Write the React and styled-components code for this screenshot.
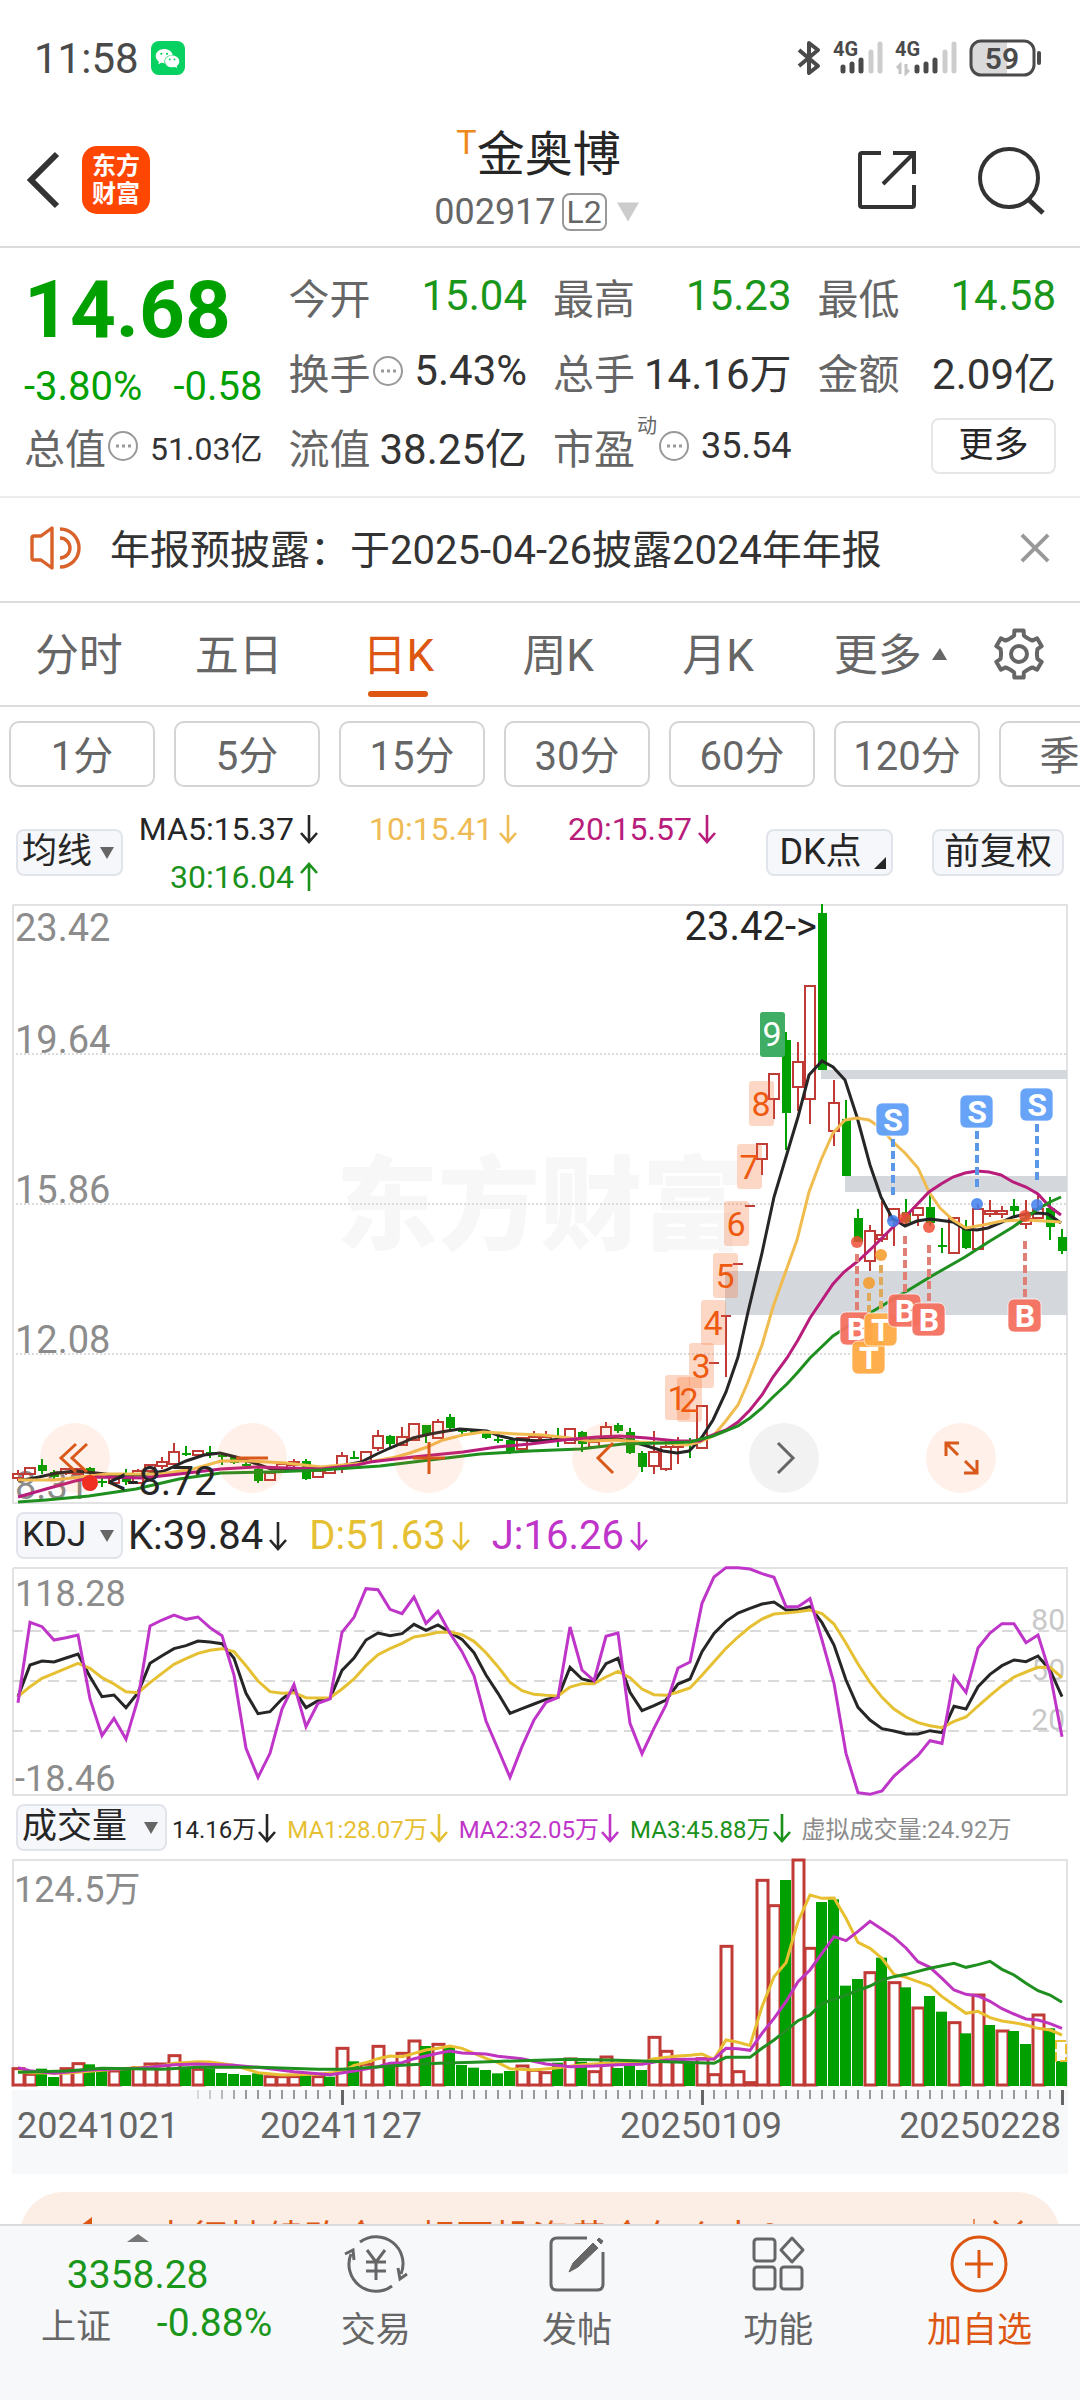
import React from "react";
import styled, { createGlobalStyle } from "styled-components";
import { AiFillWechat } from "react-icons/ai";

const GREEN = "#00a000";
const RED = "#c03a36";
const ORANGE = "#dd5713";

/* ---------- chart data ---------- */

const STEP = 12;
const px = (i) => 6 + i * STEP;

// colour, body top, body bottom, high, low
const candles = [
  ["r", 570, 574, 566, 577], ["r", 564, 570, 564, 571], ["g", 561, 567, 555, 570],
  ["g", 568, 573, 566, 575], ["r", 565, 569, 564, 571], ["r", 565, 570, 564, 571],
  ["g", 564, 569, 563, 571], ["g", 577, 579, 574, 583], ["r", 573, 579, 571, 580],
  ["g", 574, 578, 565, 581], ["r", 567, 579, 565, 580], ["r", 561, 567, 560, 568],
  ["r", 558, 562, 553, 565], ["r", 548, 560, 539, 561], ["g", 549, 551, 542, 552],
  ["r", 547, 551, 546, 553], ["g", 548, 550, 542, 554], ["g", 551, 553, 549, 561],
  ["g", 553, 559, 552, 560], ["g", 560, 562, 558, 565], ["g", 565, 577, 564, 579],
  ["r", 569, 576, 568, 577], ["r", 560, 565, 559, 566], ["r", 558, 561, 555, 565],
  ["g", 557, 575, 555, 576], ["r", 567, 573, 566, 574], ["r", 565, 569, 564, 570],
  ["r", 552, 563, 548, 569], ["g", 553, 555, 547, 555], ["r", 548, 558, 548, 559],
  ["r", 532, 544, 526, 547], ["g", 532, 540, 531, 544], ["r", 533, 541, 523, 542],
  ["r", 520, 536, 519, 537], ["g", 521, 531, 521, 539], ["r", 518, 534, 515, 535],
  ["g", 513, 524, 510, 526], ["g", 526, 528, 525, 532], ["g", 527, 529, 526, 530],
  ["g", 529, 534, 528, 535], ["g", 535, 537, 532, 539], ["g", 536, 549, 535, 550],
  ["r", 534, 545, 533, 546], ["r", 533, 536, 527, 538], ["r", 533, 536, 527, 538],
  ["g", 535, 537, 524, 543], ["r", 525, 539, 524, 540], ["g", 528, 540, 527, 548],
  ["r", 538, 543, 537, 544], ["r", 523, 536, 518, 537], ["g", 521, 527, 519, 529],
  ["g", 528, 549, 524, 550], ["g", 549, 563, 547, 568], ["r", 548, 562, 527, 570],
  ["r", 543, 565, 536, 567], ["r", 540, 543, 533, 560], ["g", 536, 539, 534, 554],
  ["r", 502, 544, 502, 544], ["r", 459, 459, 459, 459], ["r", 412, 412, 412, 473],
  ["r", 360, 360, 360, 360], ["r", 302, 302, 302, 302], ["r", 240, 255, 240, 271],
  ["r", 170, 195, 170, 215], ["g", 136, 209, 128, 246], ["r", 158, 183, 138, 207],
  ["r", 82, 195, 82, 220], ["g", 9, 166, 0, 166], ["r", 199, 227, 176, 242],
  ["g", 215, 272, 196, 272], ["g", 314, 338, 305, 338], ["r", 327, 357, 321, 367],
  ["r", 331, 335, 297, 338], ["r", 305, 316, 304, 342], ["g", 308, 318, 295, 320],
  ["r", 304, 311, 303, 322], ["g", 303, 319, 291, 322], ["g", 341, 343, 324, 349],
  ["r", 314, 349, 314, 349], ["g", 325, 344, 316, 345], ["r", 305, 345, 300, 345],
  ["r", 307, 310, 296, 313], ["r", 307, 310, 302, 314], ["g", 302, 307, 295, 312],
  ["r", 315, 320, 296, 325], ["r", 305, 314, 289, 315], ["g", 304, 323, 293, 336],
  ["g", 333, 347, 325, 350],
];

const averages = [
  {
    color: "#262626",
    points:
      "6,577 27,573 45,569 63,567 84,569 102,571 131,571 152,567 174,557 192,551 208,549 224,553 242,559 259,565 292,565 324,563 349,558 365,550 378,544 390,539 401,534 418,530 435,527 448,525 475,527 488,532 501,535 525,537 551,535 585,536 601,534 618,537 635,542 651,547 665,549 677,547 681,543 690,533 701,516 714,488 726,453 736,408 750,349 762,293 774,253 786,213 797,171 810,157 821,163 833,176 845,213 858,261 869,293 880,314 893,322 905,317 918,315 941,318 953,325 965,326 976,324 990,318 1001,313 1014,310 1026,309 1036,310 1049,319",
  },
  {
    color: "#f0bc50",
    points:
      "6,576 42,576 95,570 149,570 181,565 209,557 238,557 274,559 309,563 352,559 384,553 398,549 415,543 431,536 451,531 471,528 505,530 531,531 558,534 578,537 605,536 628,538 651,539 675,541 688,538 701,532 713,518 726,501 736,478 750,441 761,403 785,336 797,288 809,256 821,229 833,216 845,214 857,216 869,224 881,238 893,249 906,264 917,288 928,304 941,316 954,324 971,321 990,317 1015,316 1049,318",
  },
  {
    color: "#b91d7b",
    points:
      "6,593 34,585 63,577 84,573 131,574 167,570 209,565 245,563 309,565 345,561 358,558 401,553 451,548 485,543 518,540 551,536 585,533 608,532 635,534 665,537 688,537 695,533 714,526 726,518 738,506 750,491 761,473 775,454 786,436 798,414 821,380 832,368 846,357 860,344 880,324 895,311 917,288 929,280 941,273 953,269 965,267 977,268 989,271 1001,278 1014,283 1026,290 1038,303 1049,311",
  },
  {
    color: "#1f8f1f",
    points:
      "6,598 34,596 77,592 124,585 167,575 209,569 259,568 309,566 368,562 418,556 468,550 518,547 568,545 611,540 651,539 678,538 701,532 726,522 738,514 750,504 761,493 775,480 786,468 798,454 821,432 841,419 868,403 895,387 918,373 953,353 978,337 1001,323 1026,305 1038,298 1049,293",
  },
];

const counts = [
  [653, 471, "1"], [665, 473, "2"], [677, 439, "3"], [689, 396, "4"],
  [701, 349, "5"], [712, 297, "6"], [725, 240, "7"], [737, 177, "8"],
];

// letter, x, badge top, dash from, dash to, dot y
const signals = [
  ["S", 881, 199, 235, 291, 317], ["S", 965, 191, 227, 283, 300], ["S", 1025, 184, 220, 276, 301],
  ["B", 845, 408, 350, 406, 338], ["T", 857, 437, 389, 408, 379], ["T", 869, 409, 361, 408, 351],
  ["B", 893, 390, 332, 388, 314], ["B", 917, 399, 341, 397, 323], ["B", 1013, 395, 337, 393, 312],
];
const signalColor = { S: "#5f9ff8", B: "#f4705f", T: "#ffaa45" };
const dashColor = { S: "#5b98e8", B: "#e07f75", T: "#dfa95c" };
const dotColor = { S: "#3f80ee", B: "#ee4e36", T: "#f59a25" };

// oscillator samples, three units to a pixel
const kLine = [
  590, 495, 483, 486, 474, 462, 530, 590, 585, 623, 578, 490, 467, 446, 437, 423, 426, 431, 475, 580, 641, 635,
  597, 570, 623, 602, 595, 511, 474, 420, 399, 407, 401, 373, 391, 375, 397, 418, 458, 525, 580, 640, 626, 612,
  598, 592, 502, 537, 546, 491, 475, 577, 632, 617, 600, 552, 537, 455, 400, 364, 339, 325, 312, 306, 330, 330,
  320, 368, 435, 540, 622, 660, 686, 693, 702, 702, 692, 698, 619, 627, 560, 523, 497, 480, 485, 468, 510, 590,
];
const dLine = [
  590, 560, 535, 520, 505, 490, 505, 533, 552, 575, 578, 548, 520, 493, 476, 460, 451, 446, 455, 497, 543, 575,
  580, 578, 593, 594, 593, 567, 537, 497, 464, 446, 430, 411, 405, 397, 396, 404, 424, 458, 500, 547, 572, 583,
  586, 588, 561, 551, 551, 531, 514, 533, 567, 584, 586, 576, 564, 526, 485, 445, 411, 381, 357, 342, 339, 335,
  330, 341, 372, 430, 492, 547, 592, 627, 651, 668, 677, 683, 664, 651, 618, 587, 557, 531, 516, 502, 502, 533,
];
const jLine = [
  608, 367, 380, 420, 413, 405, 597, 707, 655, 718, 597, 378, 360, 345, 358, 351, 383, 407, 525, 745, 832, 760,
  627, 553, 680, 610, 597, 397, 352, 266, 269, 328, 341, 291, 370, 334, 400, 455, 527, 663, 747, 832, 740, 660,
  607, 592, 381, 510, 542, 409, 399, 670, 761, 685, 615, 504, 486, 310, 231, 203, 203, 207, 221, 232, 320, 320,
  296, 420, 550, 760, 878, 883, 873, 828, 797, 766, 722, 730, 530, 577, 444, 399, 371, 371, 428, 405, 520, 710,
];

const bars =
  "r833 r850 g836 g861 r833 r818 g823 g838 r840 g833 r830 r819 r819 r794 g830 r835 g835 g849 g852 g855 g850 r857 r857 r857 g855 r857 g860 r772 g814 r820 r766 g820 r787 r750 g768 r760 g768 g825 g833 g840 g850 g843 r825 r838 r845 g818 r804 g815 r842 r798 g834 g828 g840 r739 r781 r805 g816 r803 r851 r466 r842 r875 r268 r344 g270 r207 r472 g336 g328 g587 g567 r545 g503 r575 g592 r651 g618 g665 r695 g730 r612 g705 r720 g723 g762 r672 g715 g813".split(
    " "
  );

const volumeLines = [
  {
    color: "#e8bf30",
    data: [[0, 845], [1, 848], [4, 850], [8, 838], [12, 828], [13, 820], [15, 815], [16, 816], [18, 826], [20, 848], [22, 855], [25, 853], [27, 845], [28, 826], [29, 818], [30, 806], [31, 798], [32, 800], [33, 790], [34, 780], [35, 775], [36, 768], [37, 775], [38, 790], [39, 805], [40, 818], [41, 836], [43, 840], [45, 833], [47, 824], [49, 820], [52, 818], [53, 806], [55, 798], [56, 796], [57, 792], [58, 808], [59, 750], [60, 757], [61, 766], [62, 650], [63, 560], [64, 518], [65, 395], [66, 315], [67, 325], [68, 324], [69, 385], [70, 457], [71, 475], [72, 505], [73, 553], [74, 562], [75, 575], [76, 588], [77, 620], [78, 645], [79, 670], [80, 664], [81, 683], [82, 693], [83, 698], [84, 705], [85, 715], [86, 720], [87, 735]],
  },
  {
    color: "#bf35c0",
    data: [[0, 833], [1, 842], [3, 850], [6, 840], [10, 835], [13, 824], [15, 822], [18, 826], [20, 832], [23, 845], [26, 854], [28, 843], [30, 830], [31, 820], [32, 818], [33, 806], [35, 790], [36, 783], [37, 789], [39, 792], [40, 799], [42, 806], [44, 822], [46, 830], [48, 828], [50, 824], [52, 823], [54, 810], [56, 808], [58, 807], [59, 775], [60, 776], [61, 781], [62, 730], [63, 685], [64, 635], [65, 575], [66, 540], [67, 490], [68, 440], [69, 452], [70, 424], [71, 394], [72, 418], [73, 442], [74, 474], [75, 515], [76, 532], [77, 565], [78, 600], [79, 613], [80, 618], [81, 634], [82, 656], [83, 672], [84, 687], [85, 690], [86, 701], [87, 715]],
  },
  {
    color: "#1f8f1f",
    data: [[0, 847], [4, 843], [7, 835], [12, 838], [15, 832], [20, 832], [25, 838], [27, 838], [29, 833], [32, 826], [35, 820], [38, 817], [42, 812], [46, 808], [50, 811], [54, 815], [58, 820], [59, 802], [61, 802], [62, 775], [63, 750], [64, 722], [65, 692], [66, 675], [67, 640], [69, 615], [71, 588], [72, 570], [73, 560], [74, 553], [76, 535], [77, 527], [78, 520], [79, 532], [80, 524], [81, 514], [82, 538], [83, 555], [84, 580], [85, 602], [86, 615], [87, 637]],
  },
];

const oscPoints = (line) => line.map((v, i) => `${px(i)},${v / 3 - 67}`).join(" ");
const volPoints = (line) => line.map(([i, v]) => `${px(i)},${v / 3 - 69}`).join(" ");

/* ---------- charts ---------- */

const PriceChart = () => (
  <Chart viewBox="0 0 1056 600" role="img" aria-label="日K">
    <text x="324" y="338" fontSize="102" fontWeight="900" fill="#f7f7f7">
      东方财富
    </text>
    <g stroke="#dcdcdc" strokeWidth="2" strokeDasharray="2 2">
      <path d="M0 150H1056M0 300H1056M0 450H1056" />
    </g>
    <path d="M1 1H1055V599H1V1" fill="none" stroke="#e2e2e4" strokeWidth="2" />
    <g fill="#d4d7dc">
      <rect x="809" y="166" width="246" height="9" />
      <rect x="833" y="272" width="222" height="16" />
      <rect x="713" y="367" width="342" height="44" />
    </g>
    <g fontSize="38" fill="#8c8c8c">
      <text x="3" y="37">23.42</text>
      <text x="3" y="149">19.64</text>
      <text x="3" y="299">15.86</text>
      <text x="3" y="449">12.08</text>
      <text x="3" y="595">8.31</text>
    </g>
    {candles.map(([c, top, bottom, high, low], i) => {
      const x = px(i);
      if (c === "g") {
        return (
          <g key={i} fill={GREEN}>
            <rect x={x - 1} y={high} width="2" height={low - high} />
            <rect x={x - 4} y={top} width="9" height={bottom - top} />
          </g>
        );
      }
      return (
        <g key={i} stroke={RED} strokeWidth="2" fill="none">
          <path d={`M${x} ${high}V${top}M${x} ${bottom}V${low}`} />
          {top === bottom ? (
            <path d={`M${x - 5} ${top}H${x + 5}`} />
          ) : (
            <rect x={x - 5} y={top} width="10" height={bottom - top} />
          )}
        </g>
      );
    })}
    {averages.map((line) => (
      <polyline key={line.color} points={line.points} fill="none" stroke={line.color} strokeWidth="3" />
    ))}
    {counts.map(([x, y, n]) => (
      <g key={n}>
        <rect x={x} y={y} width="25" height="45" rx="3" fill="#f96a2a" opacity="0.27" />
        <text x={x + 12} y={y + 35} fontSize="34" fill="#ee5a10" textAnchor="middle">
          {n}
        </text>
      </g>
    ))}
    <rect x="748" y="108" width="25" height="45" rx="3" fill="#3fad63" />
    <text x="760" y="142" fontSize="34" fill="#fff" textAnchor="middle">
      9
    </text>
    {signals.map(([kind, x, top, from, to, dot]) => (
      <g key={kind + x}>
        <path d={`M${x} ${from}V${to}`} stroke={dashColor[kind]} strokeWidth="4" strokeDasharray="8 4" />
        <circle cx={x} cy={dot} r="6" fill={dotColor[kind]} opacity="0.85" />
        <rect
          x={x - 17}
          y={top}
          width="33"
          height="33"
          rx="6"
          fill={signalColor[kind]}
          fillOpacity="0.95"
          stroke="#fff"
          strokeOpacity="0.7"
        />
        <text x={x} y={top + 28} fontSize="32" fontWeight="700" fill="#fff" textAnchor="middle">
          {kind}
        </text>
      </g>
    ))}
    <circle cx="78" cy="579" r="8" fill="#f02822" />
    <g fontSize="40" fill="#262626">
      <text x="95" y="591">{"<-8.72"}</text>
      <text x="805" y="36" textAnchor="end">
        {"23.42->"}
      </text>
    </g>
  </Chart>
);

const KdjChart = () => (
  <Chart viewBox="0 0 1056 229" role="img" aria-label="KDJ">
    <path d="M1 1H1055V228H1V1" fill="none" stroke="#e2e2e4" strokeWidth="2" />
    <path d="M0 64H1056M0 114H1056M0 164H1056" stroke="#dadada" strokeWidth="2" strokeDasharray="11 7" />
    <g fontSize="36" fill="#8c8c8c">
      <text x="3" y="39">118.28</text>
      <text x="3" y="224">-18.46</text>
    </g>
    <g fontSize="30" fill="#c8c8c8" textAnchor="end">
      <text x="1053" y="63">80</text>
      <text x="1053" y="113">50</text>
      <text x="1053" y="163">20</text>
    </g>
    <g fill="none" strokeWidth="3">
      <polyline points={oscPoints(kLine)} stroke="#262626" />
      <polyline points={oscPoints(dLine)} stroke="#e6c033" />
      <polyline points={oscPoints(jLine)} stroke="#bf35c9" />
    </g>
  </Chart>
);

const VolumeChart = () => (
  <Chart viewBox="0 0 1056 228" role="img" aria-label="成交量">
    <path d="M1 228V1H1055V228" fill="none" stroke="#e2e2e4" strokeWidth="2" />
    <text x="2" y="43" fontSize="36" fill="#8c8c8c">
      124.5万
    </text>
    {bars.map((bar, i) => {
      const y = Number(bar.slice(1)) / 3 - 69;
      return bar[0] === "g" ? (
        <rect key={i} x={px(i) - 6} y={y} width="11" height={227 - y} fill={GREEN} />
      ) : (
        <rect key={i} x={px(i) - 5} y={y + 1} width="11" height={225 - y} fill="#fff" stroke={RED} strokeWidth="3" />
      );
    })}
    <rect x="1044" y="182" width="10" height="20" fill="none" stroke="#e8bf30" strokeWidth="2" strokeDasharray="10 3" />
    {volumeLines.map((line) => (
      <polyline key={line.color} points={volPoints(line.data)} fill="none" stroke={line.color} strokeWidth="3" />
    ))}
  </Chart>
);

const DateAxis = () => (
  <Chart viewBox="0 0 1056 87">
    <rect y="3" width="1056" height="84" fill="#f7f8fa" />
    {bars.map((_, i) => {
      if (i < 15) return null;
      const major = i % 30 === 27;
      return (
        <rect
          key={i}
          x={px(i) - 1}
          y="3"
          width={major ? 3 : 2}
          height={major ? 15 : 9}
          fill={major ? "#666" : "#999"}
          opacity={Math.min(1, (i - 13) / 6)}
        />
      );
    })}
    <g fontSize="36" fill="#666">
      <text x="5" y="51">20241021</text>
      <text x="329" y="51" textAnchor="middle">
        20241127
      </text>
      <text x="689" y="51" textAnchor="middle">
        20250109
      </text>
      <text x="1049" y="51" textAnchor="end">
        20250228
      </text>
    </g>
  </Chart>
);

/* ---------- icons ---------- */

const Trend = ({ up }) => (
  <svg width="18" height="30" viewBox="0 0 18 30" fill="none" stroke="currentColor" strokeWidth="2.6">
    <path d={up ? "M9 29V2M1 11L9 2L17 11" : "M9 1V28M1 19L9 28L17 19"} />
  </svg>
);

const Signal = ({ data }) => (
  <svg width={data ? 62 : 50} height="37" viewBox={data ? "0 0 62 37" : "12 0 50 37"}>
    <text x={data ? 0 : 12} y="16" fontSize="20" fontWeight="700" fill="#4a4a4a">
      4G
    </text>
    {data && <path d="M5 34V25L2 28M11 24V33L14 30" fill="none" stroke="#c4c4c4" strokeWidth="3" />}
    <g strokeWidth="5" strokeLinecap="round">
      <path d="M22 27V31M31 24V31M40 20V31" stroke="#4a4a4a" />
      <path d="M50 12V31M59 4V31" stroke="#cdcdcd" />
    </g>
  </svg>
);

const gearPath = () => {
  const pts = [];
  for (let k = 0; k < 6; k += 1) {
    [[-26, 18], [-15, 19], [-11, 24], [11, 24], [15, 19], [26, 18]].forEach(([a, r]) => {
      const t = ((k * 60 - 90 + a) * Math.PI) / 180;
      pts.push(`${(26 + r * Math.cos(t)).toFixed(1)} ${(26 + r * Math.sin(t)).toFixed(1)}`);
    });
  }
  return `M${pts.join("L")}Z`;
};

const More = () => (
  <svg width="30" height="30" viewBox="0 0 30 30">
    <circle cx="15" cy="15" r="14" fill="none" stroke="#999" strokeWidth="2" />
    <path d="M8 15h3M14 15h3M20 15h3" stroke="#999" strokeWidth="3" />
  </svg>
);

const Caret = ({ size = 14 }) => (
  <svg width={size} height={size} viewBox="0 0 14 14" fill="currentColor">
    <path d="M0 1H14L7 13Z" />
  </svg>
);

/* ---------- page ---------- */

const tabs = ["分时", "五日", "日K", "周K", "月K", "更多"];
const periods = ["1分", "5分", "15分", "30分", "60分", "120分", "季K"];

const Picker = ({ label, width }) => (
  <PickerBox $width={width}>
    <select aria-label={label} defaultValue={label}>
      <option>{label}</option>
    </select>
    <Caret />
  </PickerBox>
);

const App = () => (
  <Shell>
    <GlobalStyle />
    <Content>
      <StatusBar>
        <Time>11:58</Time>
        <WechatBadge>
          <AiFillWechat size={27} />
        </WechatBadge>
        <StatusIcons>
          <svg width="24" height="36" viewBox="0 0 24 36" fill="none" stroke="#4a4a4a" strokeWidth="4">
            <path d="M2 10L21 26L12 33V3L21 10L2 26" strokeLinejoin="round" />
          </svg>
          <Signal />
          <Signal data />
          <svg width="73" height="38" viewBox="0 0 73 38">
            <path d="M12 2H38V36H12Q2 36 2 26V12Q2 2 12 2Z" fill="#dadada" />
            <rect x="2" y="2" width="63" height="34" rx="10" fill="none" stroke="#4a4a4a" strokeWidth="3" />
            <path d="M70 14V24" stroke="#4a4a4a" strokeWidth="4" strokeLinecap="round" />
            <text x="33" y="30" fontSize="30" fontWeight="600" fill="#4a4a4a" textAnchor="middle">
              59
            </text>
          </svg>
        </StatusIcons>
      </StatusBar>

      <Header>
        <HeaderSide>
          <IconButton aria-label="返回">
            <svg width="34" height="56" viewBox="0 0 34 56" fill="none" stroke="#333" strokeWidth="6">
              <path d="M31 2L5 28L31 54" />
            </svg>
          </IconButton>
          <BrandLogo>
            <span>东方</span>
            <span>财富</span>
          </BrandLogo>
        </HeaderSide>
        <TitleBlock>
          <Title>
            <sup>T</sup>金奥博
          </Title>
          <CodeRow>
            002917<Level>L2</Level>
            <CodeCaret>
              <Caret size={22} />
            </CodeCaret>
          </CodeRow>
        </TitleBlock>
        <HeaderSide $end>
          <IconButton aria-label="分享">
            <svg width="60" height="60" viewBox="0 0 60 60" fill="none" stroke="#333" strokeWidth="4">
              <path d="M24 3H5Q3 3 3 5V55Q3 57 5 57H55Q57 57 57 55V35" />
              <path d="M36 3H57V24M57 3L26 34" />
            </svg>
          </IconButton>
          <IconButton aria-label="搜索">
            <svg width="68" height="68" viewBox="0 0 68 68" fill="none" stroke="#333" strokeWidth="4">
              <circle cx="32" cy="32" r="29" />
              <path d="M52 54L66 67" strokeWidth="5" />
            </svg>
          </IconButton>
        </HeaderSide>
      </Header>

      <Quote>
        <PriceCell>
          <Price>14.68</Price>
          <Change>
            <span>-3.80%</span>
            <span>-0.58</span>
          </Change>
        </PriceCell>
        <Stat $green>
          <span>今开</span>
          <b>15.04</b>
        </Stat>
        <Stat $green>
          <span>最高</span>
          <b>15.23</b>
        </Stat>
        <Stat $green>
          <span>最低</span>
          <b>14.58</b>
        </Stat>
        <Stat>
          <span>
            换手
            <More />
          </span>
          <b>5.43%</b>
        </Stat>
        <Stat>
          <span>总手</span>
          <b>14.16万</b>
        </Stat>
        <Stat>
          <span>金额</span>
          <b>2.09亿</b>
        </Stat>
        <Stat $size={32}>
          <span>
            总值
            <More />
          </span>
          <b>51.03亿</b>
        </Stat>
        <Stat>
          <span>流值</span>
          <b>38.25亿</b>
        </Stat>
        <Stat $size={36}>
          <span>
            市盈<sup>动</sup>
            <More />
          </span>
          <b>35.54</b>
        </Stat>
        <MoreButton>更多</MoreButton>
      </Quote>

      <Notice>
        <svg width="50" height="44" viewBox="0 0 50 44" fill="none" stroke="#d8622a" strokeWidth="3.4">
          <path d="M2 12Q2 10 4 10H11L22 2V42L11 34H4Q2 34 2 32Z" strokeLinejoin="round" />
          <path d="M30 12A10 10 0 0 1 30 32M30 3A19 19 0 0 1 30 41" />
        </svg>
        <p>年报预披露：于2025-04-26披露2024年年报</p>
        <IconButton aria-label="关闭">
          <svg width="30" height="30" viewBox="0 0 32 32" stroke="#999" strokeWidth="4">
            <path d="M2 2L30 30M30 2L2 30" />
          </svg>
        </IconButton>
      </Notice>

      <TabBar>
        {tabs.map((tab) => (
          <Tab key={tab} $active={tab === "日K"}>
            {tab}
            {tab === "更多" && (
              <TabMark width="15" height="12" viewBox="0 0 15 12">
                <path d="M0 12H15L8 0Z" fill="#666" />
              </TabMark>
            )}
          </Tab>
        ))}
        <GearButton aria-label="设置">
          <svg width="52" height="52" viewBox="0 0 52 52" fill="none" stroke="#666" strokeWidth="4">
            <path d={gearPath()} strokeLinejoin="round" />
            <circle cx="26" cy="26" r="8" />
          </svg>
        </GearButton>
      </TabBar>

      <Periods>
        {periods.map((p) => (
          <Period key={p}>{p}</Period>
        ))}
      </Periods>

      <MaBar>
        <Picker label="均线" width={107} />
        <MaGrid>
          <Reading $color="#262626">
            MA5:15.37
            <Trend />
          </Reading>
          <Reading $color="#efbb55">
            10:15.41
            <Trend />
          </Reading>
          <Reading $color="#b91d7b">
            20:15.57
            <Trend />
          </Reading>
          <Reading $color="#1a911a">
            30:16.04
            <Trend up />
          </Reading>
        </MaGrid>
        <Tool $width={127} $corner>
          DK点
          <svg width="12" height="12" viewBox="0 0 12 12">
            <path d="M12 0V12H0Z" fill="#262626" />
          </svg>
        </Tool>
        <Tool $width={132}>前复权</Tool>
      </MaBar>

      <Panel>
        <PriceChart />
        <ChartControls>
          <RoundButton aria-label="最早">
            <svg viewBox="0 0 70 70">
              <path d="M36 21L21 35L36 49M47 21L32 35L47 49" />
            </svg>
          </RoundButton>
          <RoundButton aria-label="缩小">
            <svg viewBox="0 0 70 70">
              <path d="M19 35H51" />
            </svg>
          </RoundButton>
          <RoundButton aria-label="放大">
            <svg viewBox="0 0 70 70">
              <path d="M19 35H51M35 19V51" />
            </svg>
          </RoundButton>
          <RoundButton aria-label="向左">
            <svg viewBox="0 0 70 70">
              <path d="M41 20L26 35L41 50" />
            </svg>
          </RoundButton>
          <RoundButton aria-label="向右" $grey>
            <svg viewBox="0 0 70 70">
              <path d="M29 20L44 35L29 50" />
            </svg>
          </RoundButton>
          <RoundButton aria-label="全屏">
            <svg viewBox="0 0 70 70">
              <path d="M33 20H20V33M20 20L32 32M38 50H51V37M51 50L39 38" />
            </svg>
          </RoundButton>
        </ChartControls>
      </Panel>

      <PanelHead $gap={22}>
        <Picker label="KDJ" width={107} />
        <Reading $color="#262626" $size={40}>
          K:39.84
          <Trend />
        </Reading>
        <Reading $color="#e6c033" $size={40}>
          D:51.63
          <Trend />
        </Reading>
        <Reading $color="#bf35c9" $size={40}>
          J:16.26
          <Trend />
        </Reading>
      </PanelHead>
      <Panel>
        <KdjChart />
      </Panel>

      <PanelHead $gap={11}>
        <Picker label="成交量" width={151} />
        <Reading $color="#262626" $size={24}>
          14.16万
          <Trend />
        </Reading>
        <Reading $color="#e6c033" $size={24}>
          MA1:28.07万
          <Trend />
        </Reading>
        <Reading $color="#bf35c9" $size={24}>
          MA2:32.05万
          <Trend />
        </Reading>
        <Reading $color="#1a911a" $size={24}>
          MA3:45.88万
          <Trend />
        </Reading>
        <Reading $color="#8c8c8c" $size={24}>
          虚拟成交量:24.92万
        </Reading>
      </PanelHead>
      <Panel>
        <VolumeChart />
        <DateAxis />
      </Panel>

      <Banner>
        <svg width="40" height="40" viewBox="0 0 40 40" fill={ORANGE}>
          <path d="M6 14H14L30 2V38L14 28H6Z" />
        </svg>
        <p>央行持续购金，想要投资黄金怎么办？</p>
        <BannerClose aria-label="关闭">
          <svg width="32" height="32" viewBox="0 0 32 32" stroke={ORANGE} strokeWidth="3">
            <path d="M2 2L30 30M30 2L2 30" />
          </svg>
        </BannerClose>
      </Banner>
    </Content>

    <BottomNav>
      <IndexBox href="#index">
        <svg width="22" height="8" viewBox="0 0 22 8">
          <path d="M0 8H22L11 0Z" fill="#777" />
        </svg>
        <strong>3358.28</strong>
        <IndexRow>
          <span>上证</span>
          <em>-0.88%</em>
        </IndexRow>
      </IndexBox>
      <NavItem href="#trade">
        <svg viewBox="0 0 64 60">
          <path d="M16 8A27 27 0 0 1 57 40M48 52A27 27 0 0 1 7 20" />
          <path d="M1 20L9 16L10 26M63 40L56 45L54 34" />
          <path d="M23 16L32 28L41 16M32 28V46M22 28H42M22 37H42" />
        </svg>
        交易
      </NavItem>
      <NavItem href="#post">
        <svg viewBox="0 0 64 60">
          <path d="M42 4H12Q6 4 6 10V50Q6 56 12 56H52Q58 56 58 50V18" />
          <path d="M24 38L28 29L48 9L53 14L33 33ZM52 6L54 4L58 7L56 10Z" fill="#666" strokeWidth="1" />
        </svg>
        发帖
      </NavItem>
      <NavItem href="#tools">
        <svg viewBox="0 0 64 60">
          <rect x="8" y="5" width="21" height="22" rx="3" />
          <rect x="8" y="33" width="21" height="22" rx="3" />
          <rect x="35" y="33" width="21" height="22" rx="3" />
          <path d="M46 4L57 16L46 28L35 16Z" strokeLinejoin="round" />
        </svg>
        功能
      </NavItem>
      <NavItem href="#add" $accent>
        <svg viewBox="0 0 64 60">
          <circle cx="32" cy="30" r="27" />
          <path d="M18 30H46M32 16V44" />
        </svg>
        加自选
      </NavItem>
    </BottomNav>
  </Shell>
);

/* ---------- styles ---------- */

const GlobalStyle = createGlobalStyle`
  * {
    box-sizing: border-box;
  }
  body {
    margin: 0;
    background: #fff;
  }
  body, button, select {
    font-family: Roboto, "Noto Sans CJK SC", sans-serif;
  }
  button {
    padding: 0;
    border: 0;
    background: none;
    color: inherit;
    cursor: pointer;
  }
  a {
    text-decoration: none;
  }
  p {
    margin: 0;
  }
  svg {
    flex-shrink: 0;
    overflow: visible;
  }
`;

const Shell = styled.div`
  display: flex;
  flex-direction: column;
  height: 100vh;
  color: #262626;
  overflow: hidden;
`;

const Content = styled.main`
  flex: 1;
  min-height: 0;
  overflow: hidden;
`;

const StatusBar = styled.div`
  display: flex;
  align-items: center;
  height: 114px;
  padding: 2px 38px 0 34px;
`;

const Time = styled.span`
  font-size: 42px;
  color: #4a4a4a;
`;

const WechatBadge = styled.span`
  display: flex;
  align-items: center;
  justify-content: center;
  width: 34px;
  height: 34px;
  margin-left: 12px;
  border-radius: 8px;
  background: #07d160;
  color: #fff;
`;

const StatusIcons = styled.div`
  display: flex;
  align-items: center;
  gap: 12px;
  margin-left: auto;
`;

const Header = styled.header`
  display: flex;
  align-items: center;
  justify-content: space-between;
  height: 134px;
  padding: 0 35px 0 26px;
  border-bottom: 2px solid #dcdcdc;
`;

const HeaderSide = styled.div`
  display: flex;
  flex: 1;
  align-items: center;
  justify-content: ${({ $end }) => ($end ? "flex-end" : "flex-start")};
  gap: ${({ $end }) => ($end ? "60px" : "22px")};
`;

const IconButton = styled.button`
  display: flex;
`;

const BrandLogo = styled.div`
  display: flex;
  flex-direction: column;
  align-items: center;
  justify-content: center;
  width: 68px;
  height: 68px;
  border-radius: 15px;
  background: #ff4602;
  color: #fff;
  font-size: 24px;
  font-weight: 700;
  line-height: 28px;
`;

const TitleBlock = styled.div`
  display: flex;
  flex-direction: column;
  align-items: center;
  padding-top: 2px;
`;

const Title = styled.h1`
  margin: 0;
  padding-left: 6px;
  font-size: 48px;
  font-weight: 400;
  line-height: 62px;

  sup {
    color: #ee8a1d;
    font-size: 34px;
    font-weight: 400;
    line-height: 0;
  }
`;

const CodeRow = styled.div`
  display: flex;
  align-items: center;
  height: 52px;
  padding-left: 2px;
  color: #666;
  font-size: 36px;
`;

const Level = styled.span`
  margin-left: 6px;
  padding: 0 3px;
  border: 2px solid #999;
  border-radius: 8px;
  font-size: 32px;
  line-height: 34px;
`;

const CodeCaret = styled.span`
  display: flex;
  margin-left: 10px;
  color: #ccc;
`;

const Quote = styled.section`
  display: grid;
  grid-template-columns: repeat(4, 1fr);
  grid-auto-rows: 75px;
  column-gap: 26px;
  height: 250px;
  padding: 10px 24px 0;
  border-bottom: 2px solid #ececec;
`;

const PriceCell = styled.div`
  grid-row: span 2;
  display: flex;
  flex-direction: column;
  color: ${GREEN};
`;

const Price = styled.strong`
  font-size: 80px;
  font-weight: 700;
  line-height: 104px;
`;

const Change = styled.div`
  display: flex;
  justify-content: space-between;
  font-size: 40px;
  line-height: 50px;
`;

const Stat = styled.div`
  display: flex;
  align-items: center;
  justify-content: space-between;
  white-space: nowrap;

  span {
    display: flex;
    align-items: center;
    gap: 2px;
    color: #666;
    font-size: 41px;
  }
  sup {
    align-self: flex-start;
    font-size: 20px;
    line-height: 20px;
  }
  b {
    color: ${({ $green }) => ($green ? "#1a961a" : "#333")};
    font-size: ${({ $size = 42 }) => $size}px;
    font-weight: 400;
  }
`;

const MoreButton = styled.button`
  align-self: center;
  justify-self: end;
  width: 125px;
  height: 56px;
  border: 2px solid #e6e6e6;
  border-radius: 8px;
  font-size: 35px;
  line-height: 48px;
`;

const Notice = styled.section`
  display: flex;
  align-items: center;
  height: 105px;
  padding: 0 30px 3px;
  border-bottom: 2px solid #dcdcdc;

  p {
    flex: 1;
    padding: 0 0 2px 30px;
    color: #333;
    font-size: 40px;
    white-space: nowrap;
  }
`;

const TabBar = styled.nav`
  display: flex;
  height: 104px;
  border-bottom: 2px solid #dcdcdc;
`;

const Tab = styled.button`
  position: relative;
  flex: 13;
  padding: 0 2px 4px 0;
  color: ${({ $active }) => ($active ? ORANGE : "#666")};
  font-size: 44px;

  &::after {
    content: "";
    display: ${({ $active }) => ($active ? "block" : "none")};
    position: absolute;
    bottom: 8px;
    left: calc(50% - 31px);
    width: 60px;
    height: 6px;
    border-radius: 3px;
    background: ${ORANGE};
  }
`;

const TabMark = styled.svg`
  position: absolute;
  top: 45px;
  right: 12px;
`;

const GearButton = styled.button`
  display: flex;
  flex: 10;
  align-items: center;
  justify-content: center;
`;

const Periods = styled.div`
  display: flex;
  gap: 19px;
  padding: 14px 9px 0;
  overflow: hidden;
`;

const Period = styled.button`
  flex: 0 0 146px;
  height: 66px;
  padding-bottom: 3px;
  border: 2px solid #d4d4d4;
  border-radius: 10px;
  color: #666;
  font-size: 40px;
`;

const MaBar = styled.div`
  display: flex;
  align-items: center;
  height: 117px;
  padding: 14px 16px 0;
`;

const PickerBox = styled.label`
  position: relative;
  flex: 0 0 ${({ $width }) => $width}px;
  height: 47px;
  border: 2px solid #e1e4ea;
  border-radius: 8px;
  background: #f6f7fa;
  color: #666;

  select {
    width: 100%;
    height: 100%;
    padding: 0 0 2px 4px;
    border: 0;
    appearance: none;
    background: none;
    color: #262626;
    font-size: 35px;
  }
  svg {
    position: absolute;
    top: 15px;
    right: 7px;
    pointer-events: none;
  }
`;

const MaGrid = styled.div`
  display: grid;
  grid-template-columns: repeat(3, 199px);
  grid-auto-rows: 48px;
  flex: 1;
  margin-left: -4px;
`;

const Reading = styled.span`
  display: flex;
  align-items: center;
  justify-content: flex-end;
  gap: ${({ $size }) => ($size === 24 ? 2 : 6)}px;
  color: ${({ $color }) => $color};
  font-size: ${({ $size = 32 }) => $size}px;
  white-space: nowrap;
`;

const Tool = styled.button`
  position: relative;
  flex: 0 0 ${({ $width }) => $width}px;
  height: 47px;
  margin-left: 39px;
  padding: 0 ${({ $corner }) => ($corner ? 18 : 0)}px 2px 0;
  border: 2px solid #e1e4ea;
  border-radius: 8px;
  background: #f6f7fa;
  font-size: 36px;
  line-height: 40px;
  white-space: nowrap;

  svg {
    position: absolute;
    right: 5px;
    bottom: 5px;
  }
`;

const Panel = styled.section`
  position: relative;
  margin: 0 12px;
`;

const Chart = styled.svg`
  display: block;
  width: 100%;
  height: auto;
`;

const ChartControls = styled.div`
  position: absolute;
  right: 72px;
  bottom: 11px;
  left: 28px;
  display: flex;
  justify-content: space-between;
`;

const RoundButton = styled.button`
  width: 70px;
  height: 70px;
  border-radius: 50%;
  background: ${({ $grey }) => ($grey ? "rgba(0, 0, 0, 0.05)" : "rgba(255, 110, 40, 0.1)")};

  svg {
    display: block;
    fill: none;
    stroke: ${({ $grey }) => ($grey ? "#666" : "#d8591a")};
    stroke-width: 3;
  }
`;

const PanelHead = styled.div`
  display: flex;
  align-items: center;
  gap: ${({ $gap }) => $gap}px;
  height: 63px;
  padding: 0 16px;

  label {
    margin-right: ${({ $gap }) => 5 - $gap}px;
  }
`;

const Banner = styled.aside`
  display: flex;
  align-items: center;
  height: 86px;
  margin: 18px 20px 0;
  padding: 0 36px 0 42px;
  border-radius: 43px;
  background: #fceee5;
  color: ${ORANGE};

  p {
    flex: 1;
    padding-left: 50px;
    font-size: 38px;
    white-space: nowrap;
  }
`;

const BannerClose = styled.button`
  display: flex;
  padding-left: 17px;
  border-left: 2px solid #e5905f;
`;

const BottomNav = styled.nav`
  display: flex;
  height: 176px;
  border-top: 2px solid #d9dbdf;
  background: #f7f8fa;
`;

const IndexBox = styled.a`
  display: flex;
  flex: 275;
  flex-direction: column;
  align-items: center;
  padding-top: 8px;
  color: #1a961a;

  strong {
    margin-top: 9px;
    font-size: 39px;
    font-weight: 400;
    line-height: 48px;
  }
`;

const IndexRow = styled.div`
  display: flex;
  align-items: center;
  align-self: stretch;
  justify-content: space-between;
  height: 48px;
  padding: 0 3px 0 41px;

  span {
    color: #666;
    font-size: 35px;
  }
  em {
    font-size: 39px;
    font-style: normal;
  }
`;

const NavItem = styled.a`
  display: flex;
  flex: 201;
  flex-direction: column;
  align-items: center;
  padding-top: 8px;
  color: ${({ $accent }) => ($accent ? ORANGE : "#666")};
  font-size: 35px;
  line-height: 50px;

  svg {
    width: 64px;
    height: 60px;
    margin-bottom: 12px;
    fill: none;
    stroke: currentColor;
    stroke-width: 3;
  }
`;

export default App;
